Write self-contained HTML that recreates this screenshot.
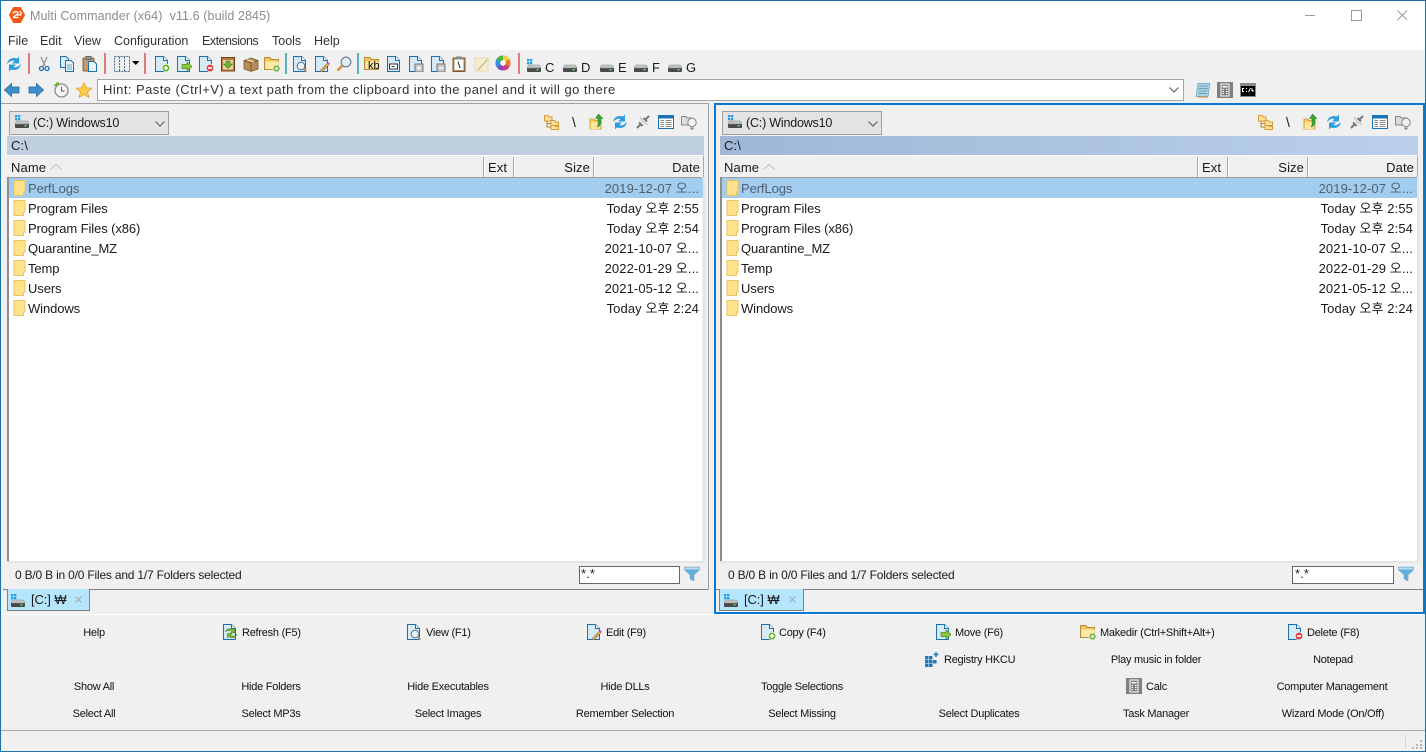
<!DOCTYPE html>
<html><head><meta charset="utf-8"><title>Multi Commander</title>
<style>
html,body{margin:0;padding:0;width:1426px;height:752px;overflow:hidden;background:#f0f0f0}
body{position:relative;font:13px/16px "Liberation Sans","Noto Sans CJK KR",sans-serif;color:#1a1a1a}
.a,.t,svg.i{position:absolute}
.t{white-space:nowrap;letter-spacing:.1px}
.c{font-size:12.5px;letter-spacing:-.2px}
.s{font-size:12px;letter-spacing:-.2px}
.r{text-align:right}
svg.i{width:16px;height:16px;overflow:visible}
.b{position:absolute;font-size:11px;line-height:14px;white-space:nowrap;letter-spacing:-.25px;color:#111;transform:translateX(-50%)}
.bl{position:absolute;font-size:11px;line-height:14px;white-space:nowrap;letter-spacing:-.25px;color:#111}
.sep{position:absolute;width:2px;top:53px;height:21px;background:linear-gradient(90deg,#d87878 50%,#60b8c0 50%)}
.m{position:absolute;top:33px;font-size:12.5px;color:#333;white-space:nowrap}
.row{position:absolute;left:0;width:694px;height:20px}
.row .n{position:absolute;left:20px;top:3px;white-space:nowrap;letter-spacing:-.1px}
.row .d{position:absolute;right:4px;top:2px;white-space:nowrap;line-height:18px;letter-spacing:.1px}
.row svg{left:2.500px;top:2px}
.sel{background:#a3cdef;color:#4f5f70}
.panel{position:absolute;top:0;left:0;width:1426px;height:752px}
.hs{position:absolute;top:157px;width:1px;height:20px;background:#a8a8a8;box-shadow:1px 0 0 #fff}
</style></head><body>
<svg width="0" height="0" style="position:absolute"><defs>
<symbol id="refresh" viewBox="0 0 16 16"><path d="M1 8C2 3 6 1 11 2.500L13 .5V7.500H6L8.500 5C6 4 3.500 5.500 1 8Z" fill="#2f9ee0"/><path d="M15 8C14 13 10 15 5 13.500L3 15.500V8.500H10L7.500 11C10 12 12.500 10.500 15 8Z" fill="#2f9ee0"/></symbol>
<symbol id="scis" viewBox="0 0 16 16"><path d="M5 1L9 10M11 1L7 10" stroke="#9a9a9a" stroke-width="1.500" fill="none"/><circle cx="5.500" cy="12.500" r="2" fill="none" stroke="#1f6fb5" stroke-width="1.300"/><circle cx="11" cy="12.500" r="2" fill="none" stroke="#1f6fb5" stroke-width="1.300"/></symbol>
<symbol id="copy" viewBox="0 0 16 16"><path d="M1.500 .5H7L9.500 3V11.500H1.500Z" fill="#d9ecf8" stroke="#1f6fa8"/><path d="M6.500 4.500H12L14.500 7V15.500H6.500Z" fill="#e6f3fb" stroke="#1f6fa8"/><path d="M8 9H13M8 11H13M8 13H13" stroke="#6fa7cc"/></symbol>
<symbol id="paste" viewBox="0 0 16 16"><rect x="1" y="2" width="11" height="13" rx="1" fill="#c89a6c" stroke="#8a5c34"/><rect x="4" y=".5" width="5" height="3" fill="#999" stroke="#666"/><path d="M6.500 5.500H12L14.500 8V15.500H6.500Z" fill="#e6f3fb" stroke="#1f6fa8"/></symbol>
<symbol id="sel" viewBox="0 0 16 16"><rect x=".5" y=".5" width="15" height="15" fill="none" stroke="#4a6a95" stroke-dasharray="2 1"/><path d="M5.500 1V15M10.500 1V15" stroke="#4a6a95" stroke-dasharray="2 1"/></symbol>
<symbol id="doc" viewBox="0 0 16 16"><path d="M1.500 .5H9.500L13.500 4.500V15.500H1.500Z" fill="#d6e9f6" stroke="#1f6fa8"/><path d="M9.500 .5V4.500H13.500" fill="#fff" stroke="#1f6fa8"/></symbol>
<symbol id="docp" viewBox="0 0 16 16"><use href="#doc"/><circle cx="12" cy="12" r="3.800" fill="#6eb52f" stroke="#fff" stroke-width=".6"/><path d="M10 12H14M12 10V14" stroke="#fff" stroke-width="1.400"/></symbol>
<symbol id="docm" viewBox="0 0 16 16"><use href="#doc"/><circle cx="12" cy="12" r="3.800" fill="#d8404a" stroke="#fff" stroke-width=".6"/><path d="M10 12H14" stroke="#fff" stroke-width="1.600"/></symbol>
<symbol id="doca" viewBox="0 0 16 16"><use href="#doc"/><path d="M6 8.500H11V6L16 10.500 11 15V12.500H6Z" fill="#8cc63f" stroke="#4f8a1a" stroke-width=".7"/></symbol>
<symbol id="box" viewBox="0 0 16 16"><rect x="1.500" y="1.500" width="13" height="13.500" fill="#b87840" stroke="#74431a"/><rect x="3" y="4" width="10" height="9.500" fill="#e9d3a8"/><path d="M6 5H10V8H12.500L8 12.500 3.500 8H6Z" fill="#6eb52f" stroke="#3e7a12" stroke-width=".6"/></symbol>
<symbol id="pkg" viewBox="0 0 16 16"><path d="M1 4.500L8 2 15 4.500V13L8 15.500 1 13Z" fill="#b98d5a" stroke="#7d5a33" stroke-width=".8"/><path d="M1 4.500L8 7 15 4.500M8 7V15.500" stroke="#7d5a33" fill="none"/><path d="M4 3.500L11 6" stroke="#e5cfa6" stroke-width="1.500"/></symbol>
<symbol id="fold" viewBox="0 0 16 16"><path d="M.5 1.500H6L7.500 3.500H14.500V13.500H.5Z" fill="#f0c566" stroke="#b98d32"/><path d="M1.500 5.500H15L14 13H1.500Z" fill="#ffe9a8"/></symbol>
<symbol id="foldp" viewBox="0 0 16 16"><use href="#fold"/><circle cx="12.500" cy="12.500" r="3.500" fill="#6eb52f" stroke="#fff" stroke-width=".6"/><path d="M10.700 12.500H14.300M12.500 10.700V14.300" stroke="#fff" stroke-width="1.300"/></symbol>
<symbol id="docv" viewBox="0 0 16 16"><use href="#doc"/><circle cx="9" cy="10" r="3.800" fill="#e8f2f8" stroke="#55708a"/><path d="M11.500 12.500L14.500 15.500" stroke="#b98d5a" stroke-width="2"/></symbol>
<symbol id="doce" viewBox="0 0 16 16"><use href="#doc"/><path d="M7 14L6.500 16 8.500 15.500 15 8.500 13.500 7Z" fill="#f2b544" stroke="#8a5c34" stroke-width=".6"/><path d="M13.500 7L15 8.500 16 7.500 14.500 6Z" fill="#d06ab0"/></symbol>
<symbol id="mag" viewBox="0 0 16 16"><circle cx="10" cy="6" r="4.800" fill="#dff0fa" stroke="#7a8a96" stroke-width="1.300"/><path d="M6.500 9.500L1.500 14.500" stroke="#d68a3c" stroke-width="2.400"/></symbol>
<symbol id="doct" viewBox="0 0 16 16"><use href="#doc"/><rect x="3.500" y="8" width="8" height="5" fill="#fff" stroke="#334"/><path d="M5.500 10.500H8.500" stroke="#223"/></symbol>
<symbol id="docsp" viewBox="0 0 16 16"><use href="#doc"/><rect x="7" y="8" width="8" height="8" fill="#c9c9c9" stroke="#777"/><path d="M9 12H13M11 10V14" stroke="#fff" stroke-width="1.200"/></symbol>
<symbol id="docsm" viewBox="0 0 16 16"><use href="#doc"/><rect x="7" y="8" width="8" height="8" fill="#c9c9c9" stroke="#777"/><path d="M9 12H13" stroke="#fff" stroke-width="1.400"/></symbol>
<symbol id="clip" viewBox="0 0 16 16"><rect x="2" y="2" width="12" height="13.500" fill="#b58a60" stroke="#7a5834"/><rect x="3.500" y="3.500" width="9" height="10.500" fill="#fff"/><rect x="5" y=".5" width="6" height="3" fill="#8a8a8a"/><path d="M7 5.500L9 12" stroke="#333" stroke-width="1.100"/></symbol>
<symbol id="wand" viewBox="0 0 16 16"><rect x="1" y="2" width="13" height="13" fill="#f5ecd0" stroke="#e3d8b8"/><path d="M4 14L13 4" stroke="#cbbd95" stroke-width="1.500"/><path d="M12 2L15 5" stroke="#dd9"/></symbol>
<symbol id="wheel" viewBox="0 0 16 16"><circle cx="8" cy="8" r="7.500" fill="#888"/><path d="M8 8V.5A7.500 7.500 0 0 1 14.500 4.200Z" fill="#f4d03a"/><path d="M8 8L14.500 4.200A7.500 7.500 0 0 1 14.500 11.800Z" fill="#ef7a2b"/><path d="M8 8L14.500 11.800A7.500 7.500 0 0 1 8 15.500Z" fill="#d93a7a"/><path d="M8 8V15.500A7.500 7.500 0 0 1 1.500 11.800Z" fill="#7a48c8"/><path d="M8 8L1.500 11.800A7.500 7.500 0 0 1 1.500 4.200Z" fill="#2f8fe0"/><path d="M8 8L1.500 4.200A7.500 7.500 0 0 1 8 .5Z" fill="#45b84a"/><circle cx="8" cy="8" r="2.800" fill="#fff"/></symbol>
<symbol id="drive" viewBox="0 0 16 16"><rect x="1" y="9" width="14" height="5" rx="1" fill="#4a4a4a"/><path d="M2.500 7H13.500L15 10H1Z" fill="#c4c4c4" stroke="#8a8a8a" stroke-width=".5"/><rect x="10.500" y="11" width="2" height="1.500" fill="#5ee05e"/></symbol>
<symbol id="drivew" viewBox="0 0 16 16"><use href="#drive"/><path d="M1 1H3.300V3.300H1ZM4 1H6.300V3.300H4ZM1 4H3.300V6.300H1ZM4 4H6.300V6.300H4Z" fill="#1c9be6"/></symbol>
<symbol id="back" viewBox="0 0 16 16"><path d="M.5 8L7.500 1.500V5H15V11H7.500V14.500Z" fill="#418fca" stroke="#2a6a9a" stroke-width=".8"/></symbol>
<symbol id="fwd" viewBox="0 0 16 16"><path d="M15.500 8L8.500 1.500V5H1V11H8.500V14.500Z" fill="#418fca" stroke="#2a6a9a" stroke-width=".8"/></symbol>
<symbol id="clock" viewBox="0 0 16 16"><circle cx="8.500" cy="8.500" r="6.500" fill="#f5f5f5" stroke="#8a8a8a" stroke-width="1.300"/><path d="M8.500 5V9H11.500" stroke="#555" fill="none"/><path d="M1 4L6 2 5 0Z" fill="#6eb52f" stroke="#6eb52f"/></symbol>
<symbol id="star" viewBox="0 0 16 16"><path d="M8 .5L10.300 5.700 15.800 6.200 11.600 9.900 12.900 15.500 8 12.500 3.100 15.500 4.400 9.900 .2 6.200 5.700 5.700Z" fill="#fbc94a" stroke="#e59a24" stroke-width=".7"/></symbol>
<symbol id="note" viewBox="0 0 16 16"><path d="M3 1.500H15L13 14.500H1Z" fill="#a9d6e6" stroke="#6aa0b4" stroke-width=".7"/><path d="M3 14.800H13" stroke="#b98d5a" stroke-width="1.300"/><path d="M4 4H13M3.700 6.500H12.700M3.300 9H12.300M3 11.500H12" stroke="#6aa0b4"/></symbol>
<symbol id="calc" viewBox="0 0 16 16"><rect width="16" height="16" fill="#808080"/><rect x="4" y="2" width="8" height="12" fill="none" stroke="#fff"/><path d="M5.500 4H10.500V5.500H5.500Z" fill="#fff"/><path d="M5.500 7.500H7M9 7.500H10.500M5.500 9.500H7M9 9.500H10.500M5.500 11.500H7M9 11.500H10.500" stroke="#fff"/></symbol>
<symbol id="cmd" viewBox="0 0 16 16"><rect y="1" width="16" height="14" fill="#8a8a8a"/><rect x="1" y="4" width="14" height="10" fill="#000"/><path d="M2 6H4V7H3V9H4V10H2ZM6 6H7V7H6ZM6 9H7V10H6ZM8 10L10 6H11L9 10ZM11.500 6H12.500V8H13.500V10H12.500V9H11.500Z" fill="#fff"/></symbol>
<symbol id="tree" viewBox="0 0 16 16"><path d="M1.500 1.500H5L6 3H9V7H1.500Z" fill="#ffe39a" stroke="#d69c3a"/><path d="M8 6.500H11.500L12.500 8H15.500V11.500H8Z" fill="#ffe39a" stroke="#d69c3a"/><path d="M8 11.500H11.500L12.500 12.500H15.500V15.500H8Z" fill="#ffe39a" stroke="#d69c3a"/><path d="M4 7V13H8M4 9.500H8" stroke="#b8862c" fill="none"/></symbol>
<symbol id="up" viewBox="0 0 16 16"><path d="M1 5H5L6 6.500H12V15H1Z" fill="#f5cc5c" stroke="#c99a30" stroke-width=".8"/><path d="M2 8H14L10 15H1.500Z" fill="#ffe89a"/><path d="M9.500 0L14 4.500H12V9C12 11 11 12 8 13C9.500 11 9.200 9.500 9 8V4.500H6.500Z" fill="#3fa63a" stroke="#23701f" stroke-width=".5"/></symbol>
<symbol id="plug" viewBox="0 0 16 16"><path d="M2 14L6 10M10 6L14 2" stroke="#777" stroke-width="2"/><path d="M4.500 7.500L8.500 11.500 6.500 12.500 3.500 9.500Z" fill="#777"/><path d="M7.500 4.500L11.500 8.500 12.500 6.500 9.500 3.500Z" fill="#777"/><path d="M8 8L5 3M8 8L13 11" stroke="#bbb"/></symbol>
<symbol id="grid" viewBox="0 0 16 16"><rect x=".5" y="1.500" width="15" height="13" fill="#fff" stroke="#1c74b8"/><rect x="1" y="2" width="14" height="2.500" fill="#1c74b8"/><path d="M2.500 6.500H6M7.500 6.500H13.500M2.500 8.500H6M7.500 8.500H13.500M2.500 10.500H6M7.500 10.500H13.500M2.500 12.500H6M7.500 12.500H13.500" stroke="#888"/></symbol>
<symbol id="bulb" viewBox="0 0 16 16"><path d="M.5 2.500H5L6 4H12V11H.5Z" fill="#ddd" stroke="#888"/><circle cx="11" cy="8.500" r="4.200" fill="#f1f1f1" stroke="#888"/><path d="M9.500 13.500H12.500V15.500H9.500Z" fill="#888"/></symbol>
<symbol id="funnel" viewBox="0 0 16 16"><path d="M.5 1H15.500V4L10 9V15L6 13V9L.5 4Z" fill="#5fb0e0" stroke="#7c9cb4" stroke-width=".5"/><path d="M1 1.500H15V3.500H1Z" fill="#b8dcf2"/></symbol>
<symbol id="f" viewBox="0 0 16 16"><path d="M2 .5H13V12H11.500V15.500H2Z" fill="#ffe38c" stroke="#e8c45c"/><path d="M11.500 15.500V12H13" fill="none" stroke="#e8c45c"/></symbol>
<symbol id="logo" viewBox="0 0 16 16"><path d="M4.500 .5H11.500L15.500 8 11.500 15.500H4.500L.5 8Z" fill="#f15a16" stroke="#f15a16" stroke-linejoin="round"/><path d="M4 6.500C5 4.500 8 4 9 5.500 10 7 5 8.500 4.500 10.500H9.500M7 8H11.500C12.500 7 12.500 5 10.500 4.500" stroke="#fff" stroke-width="1.300" fill="none"/></symbol>
<symbol id="regi" viewBox="0 0 16 16"><path d="M1 5H4.500V8.500H1ZM5 5H8.500V8.500H5ZM1 9H4.500V12.500H1ZM5 9H8.500V12.500H5ZM9 9H12.500V12.500H9ZM1 13H4.500V16H1ZM5 13H8.500V16H5Z" fill="#1f7ab8"/><path d="M12 1V6M9.500 3.500H14.500" stroke="#1f7ab8" stroke-width="1.500"/></symbol>
<symbol id="rf" viewBox="0 0 16 16"><use href="#doc"/><path d="M3.500 8C4 4.500 9 3.500 11.500 6L13 4.500V9H8.500L10 7.500C8.500 6 5.500 6 3.500 8Z" fill="#7cb82f" stroke="#3f7a12" stroke-width=".5"/><path d="M15 10C14 14 9.500 15 7 12.500L5.500 14V9.500H10L8.500 11C10 12.500 13 12.500 15 10Z" fill="#7cb82f" stroke="#3f7a12" stroke-width=".5"/></symbol>
</defs></svg>

<!-- window -->
<div class="a" style="left:0;top:0;width:1426px;height:50px;background:#fff"></div>
<svg class="i" style="left:9px;top:7px"><use href="#logo"/></svg>
<div class="t" style="left:30px;top:8px;color:#8c8c8c;font-size:12.5px;letter-spacing:.09px">Multi Commander (x64)&nbsp; v11.6 (build 2845)</div>
<div class="a" style="left:1305px;top:15px;width:10px;height:1px;background:#9a9a9a"></div>
<div class="a" style="left:1351px;top:10px;width:9px;height:9px;border:1px solid #9a9a9a"></div>
<svg class="i" style="left:1397px;top:10px;width:11px;height:11px"><path d="M.5 .5L10 10M10 .5L.5 10" stroke="#9a9a9a"/></svg>

<div class="m" style="left:8px">File</div><div class="m" style="left:40px">Edit</div><div class="m" style="left:74px">View</div><div class="m" style="left:114px">Configuration</div><div class="m" style="left:202px;letter-spacing:-.5px">Extensions</div><div class="m" style="left:272px">Tools</div><div class="m" style="left:314px">Help</div>

<!-- toolbar -->
<svg class="i" style="left:6px;top:56px"><use href="#refresh"/></svg>
<div class="sep" style="left:28px"></div>
<svg class="i" style="left:36px;top:56px"><use href="#scis"/></svg>
<svg class="i" style="left:59px;top:56px"><use href="#copy"/></svg>
<svg class="i" style="left:82px;top:56px"><use href="#paste"/></svg>
<div class="sep" style="left:104px"></div>
<svg class="i" style="left:114px;top:56px"><use href="#sel"/></svg>
<svg class="i" style="left:132px;top:61px;width:8px;height:5px"><path d="M0 0H7.500L3.700 4Z" fill="#000"/></svg>
<div class="sep" style="left:144px"></div>
<svg class="i" style="left:154px;top:56px"><use href="#docp"/></svg>
<svg class="i" style="left:176px;top:56px"><use href="#doca"/></svg>
<svg class="i" style="left:198px;top:56px"><use href="#docm"/></svg>
<svg class="i" style="left:220px;top:56px"><use href="#box"/></svg>
<svg class="i" style="left:243px;top:56px"><use href="#pkg"/></svg>
<svg class="i" style="left:264px;top:56px"><use href="#foldp"/></svg>
<div class="sep" style="left:285px"></div>
<svg class="i" style="left:292px;top:56px"><use href="#docv"/></svg>
<svg class="i" style="left:314px;top:56px"><use href="#doce"/></svg>
<svg class="i" style="left:336px;top:56px"><use href="#mag"/></svg>
<div class="sep" style="left:357px"></div>
<svg class="i" style="left:364px;top:56px"><use href="#fold"/></svg>
<div class="t" style="left:368px;top:59px;font-size:11px;line-height:14px;color:#000;letter-spacing:0">kb</div>
<svg class="i" style="left:386px;top:56px"><use href="#doct"/></svg>
<svg class="i" style="left:408px;top:56px"><use href="#docsp"/></svg>
<svg class="i" style="left:430px;top:56px"><use href="#docsm"/></svg>
<svg class="i" style="left:451px;top:56px"><use href="#clip"/></svg>
<svg class="i" style="left:474px;top:56px"><use href="#wand"/></svg>
<svg class="i" style="left:495px;top:55px"><use href="#wheel"/></svg>
<div class="sep" style="left:518px"></div>
<svg class="i" style="left:526px;top:58px"><use href="#drivew"/></svg><div class="t" style="left:545px;top:60px">C</div>
<svg class="i" style="left:562px;top:58px"><use href="#drive"/></svg><div class="t" style="left:581px;top:60px">D</div>
<svg class="i" style="left:599px;top:58px"><use href="#drive"/></svg><div class="t" style="left:618px;top:60px">E</div>
<svg class="i" style="left:633px;top:58px"><use href="#drive"/></svg><div class="t" style="left:652px;top:60px">F</div>
<svg class="i" style="left:667px;top:58px"><use href="#drive"/></svg><div class="t" style="left:686px;top:60px">G</div>

<svg class="i" style="left:4px;top:82px"><use href="#back"/></svg>
<svg class="i" style="left:28px;top:82px"><use href="#fwd"/></svg>
<svg class="i" style="left:53px;top:82px"><use href="#clock"/></svg>
<svg class="i" style="left:76px;top:82px"><use href="#star"/></svg>
<div class="a" style="left:97px;top:79px;width:1085px;height:20px;background:#fff;border:1px solid #a5a5a5"></div>
<div class="t" style="left:103px;top:82px;color:#333;letter-spacing:.44px">Hint: Paste (Ctrl+V) a text path from the clipboard into the panel and it will go there</div>
<svg class="i" style="left:1169px;top:87px;width:10px;height:6px"><path d="M.5 .5L5 5 9.500 .5" fill="none" stroke="#555"/></svg>
<svg class="i" style="left:1195px;top:82px"><use href="#note"/></svg>
<svg class="i" style="left:1217px;top:82px"><use href="#calc"/></svg>
<svg class="i" style="left:1240px;top:82px"><use href="#cmd"/></svg>

<!-- frames -->
<div class="a" style="left:1px;top:103px;width:707px;height:486px;border:1px solid #a0a0a0;border-left:0;border-bottom:0"></div>
<div class="a" style="left:714px;top:103px;width:707px;height:507px;border:2px solid #0b78d0"></div>
<div class="a" style="left:0;top:614px;width:1426px;height:1px;background:#fff"></div>

<!-- LEFT PANEL -->
<div class="panel">
<div class="a" style="left:9px;top:111px;width:158px;height:22px;background:#e3e3e3;border:1px solid #a0a0a0"></div>
<svg class="i" style="left:14px;top:114px"><use href="#drivew"/></svg>
<div class="t c" style="left:33px;top:115px">(C:) Windows10</div>
<svg class="i" style="left:155px;top:121px;width:10px;height:6px"><path d="M.5 .5L5 5 9.500 .5" fill="none" stroke="#555"/></svg>
<svg class="i" style="left:543px;top:114px"><use href="#tree"/></svg>
<div class="t" style="left:572px;top:114px;font-size:14px">\</div>
<svg class="i" style="left:589px;top:114px"><use href="#up"/></svg>
<svg class="i" style="left:612px;top:114px"><use href="#refresh"/></svg>
<svg class="i" style="left:635px;top:114px"><use href="#plug"/></svg>
<svg class="i" style="left:658px;top:114px"><use href="#grid"/></svg>
<svg class="i" style="left:681px;top:114px"><use href="#bulb"/></svg>
<div class="a" style="left:7px;top:136px;width:697px;height:19px;background:#bfcfdf"></div>
<div class="t" style="left:11px;top:138px">C:\</div>
<div class="a" style="left:7px;top:155px;width:697px;height:22px;background:#f0f0f0;border-top:1px solid #fff;border-right:1px solid #a8a8a8;box-sizing:border-box"></div>
<div class="t" style="left:11px;top:160px">Name</div>
<svg class="i" style="left:50px;top:164px;width:12px;height:6px"><path d="M.5 5.500L6 .5 11.500 5.500" fill="none" stroke="#bbb"/></svg>
<div class="hs" style="left:483px"></div><div class="hs" style="left:513px"></div><div class="hs" style="left:593px"></div>
<div class="t" style="left:488px;top:160px">Ext</div>
<div class="t r" style="right:836px;top:160px">Size</div>
<div class="t r" style="right:726px;top:160px">Date</div>
<div class="a" style="left:7px;top:177px;width:2px;height:385px;background:#8c8c8c"></div>
<div class="a" style="left:9px;top:177px;width:693px;height:384px;background:#fff;border-top:1px solid #9c9c9c"></div>
<div class="a" style="left:7px;top:561px;width:697px;height:2px;background:#e4e4e4"></div>
<div class="a" style="left:703px;top:177px;width:2px;height:385px;background:#e4e4e4"></div>
<div class="a" style="left:9px;top:178px;width:694px;height:140px;overflow:hidden">
<div class="row sel" style="top:0"><svg class="i"><use href="#f"/></svg><span class="n" style="left:19px">PerfLogs</span><span class="d">2019-12-07 오...</span></div>
<div class="row" style="top:20px"><svg class="i"><use href="#f"/></svg><span class="n" style="left:19px">Program Files</span><span class="d">Today 오후 2:55</span></div>
<div class="row" style="top:40px"><svg class="i"><use href="#f"/></svg><span class="n" style="left:19px">Program Files (x86)</span><span class="d">Today 오후 2:54</span></div>
<div class="row" style="top:60px"><svg class="i"><use href="#f"/></svg><span class="n" style="left:19px">Quarantine_MZ</span><span class="d">2021-10-07 오...</span></div>
<div class="row" style="top:80px"><svg class="i"><use href="#f"/></svg><span class="n" style="left:19px">Temp</span><span class="d">2022-01-29 오...</span></div>
<div class="row" style="top:100px"><svg class="i"><use href="#f"/></svg><span class="n" style="left:19px">Users</span><span class="d">2021-05-12 오...</span></div>
<div class="row" style="top:120px"><svg class="i"><use href="#f"/></svg><span class="n" style="left:19px">Windows</span><span class="d">Today 오후 2:24</span></div>
</div>
<div class="t s" style="left:15px;top:567px">0 B/0 B in 0/0 Files and 1/7 Folders selected</div>
<div class="a" style="left:579px;top:566px;width:99px;height:16px;background:#fff;border:1px solid #666"></div>
<div class="t" style="left:581px;top:566px;font-size:13px;color:#222">*.*</div>
<svg class="i" style="left:684px;top:566px"><use href="#funnel"/></svg>
<div class="a" style="left:3px;top:589px;width:705px;height:1px;background:#808080"></div>
<div class="a" style="left:7px;top:589px;width:81px;height:21px;background:#b5e6fd;border:1px solid #808080;border-top:0"></div>
<svg class="i" style="left:10px;top:593px"><use href="#drivew"/></svg>
<div class="t" style="left:31px;top:592px;letter-spacing:-.1px">[C:] ₩</div>
<svg class="i" style="left:75px;top:596px;width:7px;height:7px"><path d="M.5 .5L6.500 6.500M6.500 .5L.5 6.500" stroke="#a0a8b0"/></svg>
</div>

<!-- RIGHT PANEL -->
<div class="panel">
<div class="a" style="left:722px;top:111px;width:158px;height:22px;background:#e3e3e3;border:1px solid #a0a0a0"></div>
<svg class="i" style="left:727px;top:114px"><use href="#drivew"/></svg>
<div class="t c" style="left:746px;top:115px">(C:) Windows10</div>
<svg class="i" style="left:868px;top:121px;width:10px;height:6px"><path d="M.5 .5L5 5 9.500 .5" fill="none" stroke="#555"/></svg>
<svg class="i" style="left:1257px;top:114px"><use href="#tree"/></svg>
<div class="t" style="left:1286px;top:114px;font-size:14px">\</div>
<svg class="i" style="left:1303px;top:114px"><use href="#up"/></svg>
<svg class="i" style="left:1326px;top:114px"><use href="#refresh"/></svg>
<svg class="i" style="left:1349px;top:114px"><use href="#plug"/></svg>
<svg class="i" style="left:1372px;top:114px"><use href="#grid"/></svg>
<svg class="i" style="left:1395px;top:114px"><use href="#bulb"/></svg>
<div class="a" style="left:720px;top:136px;width:698px;height:19px;background:linear-gradient(90deg,#9fb7d6,#bad0ea)"></div>
<div class="t" style="left:724px;top:138px">C:\</div>
<div class="a" style="left:720px;top:155px;width:698px;height:22px;background:#f0f0f0;border-top:1px solid #fff;border-right:1px solid #a8a8a8;box-sizing:border-box"></div>
<div class="t" style="left:724px;top:160px">Name</div>
<svg class="i" style="left:763px;top:164px;width:12px;height:6px"><path d="M.5 5.500L6 .5 11.500 5.500" fill="none" stroke="#bbb"/></svg>
<div class="hs" style="left:1197px"></div><div class="hs" style="left:1227px"></div><div class="hs" style="left:1307px"></div>
<div class="t" style="left:1202px;top:160px">Ext</div>
<div class="t r" style="right:122px;top:160px">Size</div>
<div class="t r" style="right:12px;top:160px">Date</div>
<div class="a" style="left:720px;top:177px;width:2px;height:385px;background:#8c8c8c"></div>
<div class="a" style="left:722px;top:177px;width:695px;height:384px;background:#fff;border-top:1px solid #9c9c9c"></div>
<div class="a" style="left:720px;top:561px;width:698px;height:2px;background:#e4e4e4"></div>
<div class="a" style="left:1417px;top:177px;width:2px;height:385px;background:#e4e4e4"></div>
<div class="a" style="left:722px;top:178px;width:695px;height:140px;overflow:hidden">
<div class="row sel" style="top:0;width:695px"><svg class="i"><use href="#f"/></svg><span class="n" style="left:19px">PerfLogs</span><span class="d">2019-12-07 오...</span></div>
<div class="row" style="top:20px;width:695px"><svg class="i"><use href="#f"/></svg><span class="n" style="left:19px">Program Files</span><span class="d">Today 오후 2:55</span></div>
<div class="row" style="top:40px;width:695px"><svg class="i"><use href="#f"/></svg><span class="n" style="left:19px">Program Files (x86)</span><span class="d">Today 오후 2:54</span></div>
<div class="row" style="top:60px;width:695px"><svg class="i"><use href="#f"/></svg><span class="n" style="left:19px">Quarantine_MZ</span><span class="d">2021-10-07 오...</span></div>
<div class="row" style="top:80px;width:695px"><svg class="i"><use href="#f"/></svg><span class="n" style="left:19px">Temp</span><span class="d">2022-01-29 오...</span></div>
<div class="row" style="top:100px;width:695px"><svg class="i"><use href="#f"/></svg><span class="n" style="left:19px">Users</span><span class="d">2021-05-12 오...</span></div>
<div class="row" style="top:120px;width:695px"><svg class="i"><use href="#f"/></svg><span class="n" style="left:19px">Windows</span><span class="d">Today 오후 2:24</span></div>
</div>
<div class="t s" style="left:728px;top:567px">0 B/0 B in 0/0 Files and 1/7 Folders selected</div>
<div class="a" style="left:1292px;top:566px;width:100px;height:16px;background:#fff;border:1px solid #666"></div>
<div class="t" style="left:1295px;top:566px;font-size:13px;color:#222">*.*</div>
<svg class="i" style="left:1398px;top:566px"><use href="#funnel"/></svg>
<div class="a" style="left:716px;top:589px;width:707px;height:1px;background:#808080"></div>
<div class="a" style="left:719px;top:589px;width:83px;height:21px;background:#b5e6fd;border:1px solid #808080;border-top:0"></div>
<svg class="i" style="left:723px;top:593px"><use href="#drivew"/></svg>
<div class="t" style="left:744px;top:592px;letter-spacing:-.1px">[C:] ₩</div>
<svg class="i" style="left:789px;top:596px;width:7px;height:7px"><path d="M.5 .5L6.500 6.500M6.500 .5L.5 6.500" stroke="#a0a8b0"/></svg>
</div>

<!-- button bar -->
<div class="b" style="left:94px;top:626px">Help</div>
<svg class="i" style="left:222px;top:624px"><use href="#rf"/></svg><div class="bl" style="left:242px;top:626px">Refresh (F5)</div>
<svg class="i" style="left:406px;top:624px"><use href="#docv"/></svg><div class="bl" style="left:426px;top:626px">View (F1)</div>
<svg class="i" style="left:586px;top:624px"><use href="#doce"/></svg><div class="bl" style="left:606px;top:626px">Edit (F9)</div>
<svg class="i" style="left:760px;top:624px"><use href="#docp"/></svg><div class="bl" style="left:779px;top:626px">Copy (F4)</div>
<svg class="i" style="left:935px;top:624px"><use href="#doca"/></svg><div class="bl" style="left:955px;top:626px">Move (F6)</div>
<svg class="i" style="left:1080px;top:624px"><use href="#foldp"/></svg><div class="bl" style="left:1100px;top:626px">Makedir (Ctrl+Shift+Alt+)</div>
<svg class="i" style="left:1287px;top:624px"><use href="#docm"/></svg><div class="bl" style="left:1307px;top:626px">Delete (F8)</div>
<svg class="i" style="left:924px;top:651px"><use href="#regi"/></svg><div class="bl" style="left:944px;top:653px">Registry HKCU</div>
<div class="b" style="left:1156px;top:653px">Play music in folder</div>
<div class="b" style="left:1333px;top:653px">Notepad</div>
<div class="b" style="left:94px;top:680px">Show All</div>
<div class="b" style="left:271px;top:680px">Hide Folders</div>
<div class="b" style="left:448px;top:680px">Hide Executables</div>
<div class="b" style="left:625px;top:680px">Hide DLLs</div>
<div class="b" style="left:802px;top:680px">Toggle Selections</div>
<svg class="i" style="left:1126px;top:678px"><use href="#calc"/></svg><div class="bl" style="left:1146px;top:680px">Calc</div>
<div class="b" style="left:1332px;top:680px">Computer Management</div>
<div class="b" style="left:94px;top:707px">Select All</div>
<div class="b" style="left:271px;top:707px">Select MP3s</div>
<div class="b" style="left:448px;top:707px">Select Images</div>
<div class="b" style="left:625px;top:707px">Remember Selection</div>
<div class="b" style="left:802px;top:707px">Select Missing</div>
<div class="b" style="left:979px;top:707px">Select Duplicates</div>
<div class="b" style="left:1156px;top:707px">Task Manager</div>
<div class="b" style="left:1333px;top:707px">Wizard Mode (On/Off)</div>

<div class="a" style="left:1px;top:730px;width:1424px;height:1px;background:#a8a8a8"></div>
<div class="a" style="left:1405px;top:734px;width:1px;height:15px;background:#d8d8d8"></div>
<svg class="i" style="left:1412px;top:739px;width:12px;height:10px"><path d="M8 1H10V3H8ZM4 5H6V7H4ZM8 5H10V7H8ZM0 8H2V10H0ZM4 8H6V10H4ZM8 8H10V10H8Z" fill="#b8b8b8"/></svg>

<!-- window border -->
<div class="a" style="left:0;top:0;width:1424px;height:750px;border:1px solid #1a73a8;pointer-events:none"></div>
</body></html>
